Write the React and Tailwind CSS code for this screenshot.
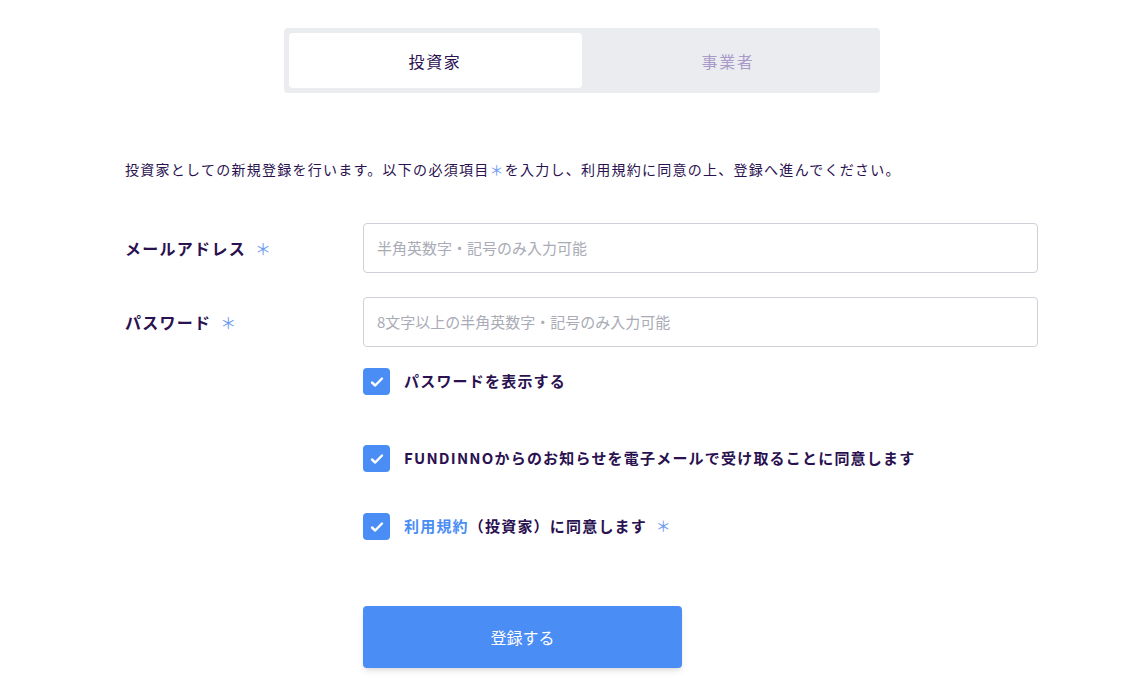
export default function App() {
  const font = { fontFamily: '"Noto Sans CJK JP", "Noto Sans", sans-serif' };
  const Check = () => (
    <div className="w-[27px] h-[27px] rounded-[4px] bg-[#4a8df5] flex items-center justify-center shrink-0">
      <svg width="16" height="16" viewBox="0 0 16 16"><path d="M3 8.5l3.2 3L13 4.5" stroke="white" strokeWidth="2.4" fill="none" strokeLinecap="round" strokeLinejoin="round"/></svg>
    </div>
  );
  const Ast = ({ cls = "" }) => <span className={"text-[#6f9cf0] font-normal " + cls}>＊</span>;
  return (
    <div className="w-[1127px] h-[679px] bg-white overflow-hidden text-[#2a1150]" style={font}>
      <div className="w-[913px] ml-[125px]">
        <div className="mt-[28px] mx-auto w-[596px] h-[65px] bg-[#ebecf0] rounded-[4px] p-[5px] flex">
          <div className="flex-1 bg-white rounded-[4px] flex items-center justify-center text-[16px] tracking-[0.1em]">投資家</div>
          <div className="flex-1 flex items-center justify-center text-[16px] tracking-[0.1em] text-[#a99bc9]">事業者</div>
        </div>
        <p className="mt-[66px] text-[14px] tracking-[0.09em] leading-[20px]">投資家としての新規登録を行います。以下の必須項目<Ast />を入力し、利用規約に同意の上、登録へ進んでください。</p>
        <div className="mt-[44px] flex items-center">
          <div className="w-[238px] font-bold text-[16px] tracking-[0.08em]">メールアドレス <Ast cls="ml-1" /></div>
          <div className="flex-1 h-[50px] border border-[#cfd1d9] rounded-[4px] flex items-center px-[13px] text-[15px] text-[#a9abb6]">半角英数字・記号のみ入力可能</div>
        </div>
        <div className="mt-[24px] flex items-center">
          <div className="w-[238px] font-bold text-[16px] tracking-[0.08em]">パスワード <Ast cls="ml-1" /></div>
          <div className="flex-1 h-[50px] border border-[#cfd1d9] rounded-[4px] flex items-center px-[13px] text-[15px] text-[#a9abb6]">8文字以上の半角英数字・記号のみ入力可能</div>
        </div>
        <div className="ml-[238px]">
          <div className="mt-[21px] flex items-center gap-[14px] font-bold text-[15px] tracking-[0.08em]"><Check />パスワードを表示する</div>
          <div className="mt-[50px] flex items-center gap-[14px] font-bold text-[15px] tracking-[0.08em]"><Check />FUNDINNOからのお知らせを電子メールで受け取ることに同意します</div>
          <div className="mt-[41px] flex items-center gap-[14px] font-bold text-[15px] tracking-[0.08em]"><Check /><span><span className="text-[#4a8df5]">利用規約</span>（投資家）に同意します <Ast cls="ml-1" /></span></div>
          <button className="mt-[66px] w-[319px] h-[62px] bg-[#4a8df5] rounded-[4px] text-white text-[16px] shadow-md">登録する</button>
        </div>
      </div>
    </div>
  );
}
